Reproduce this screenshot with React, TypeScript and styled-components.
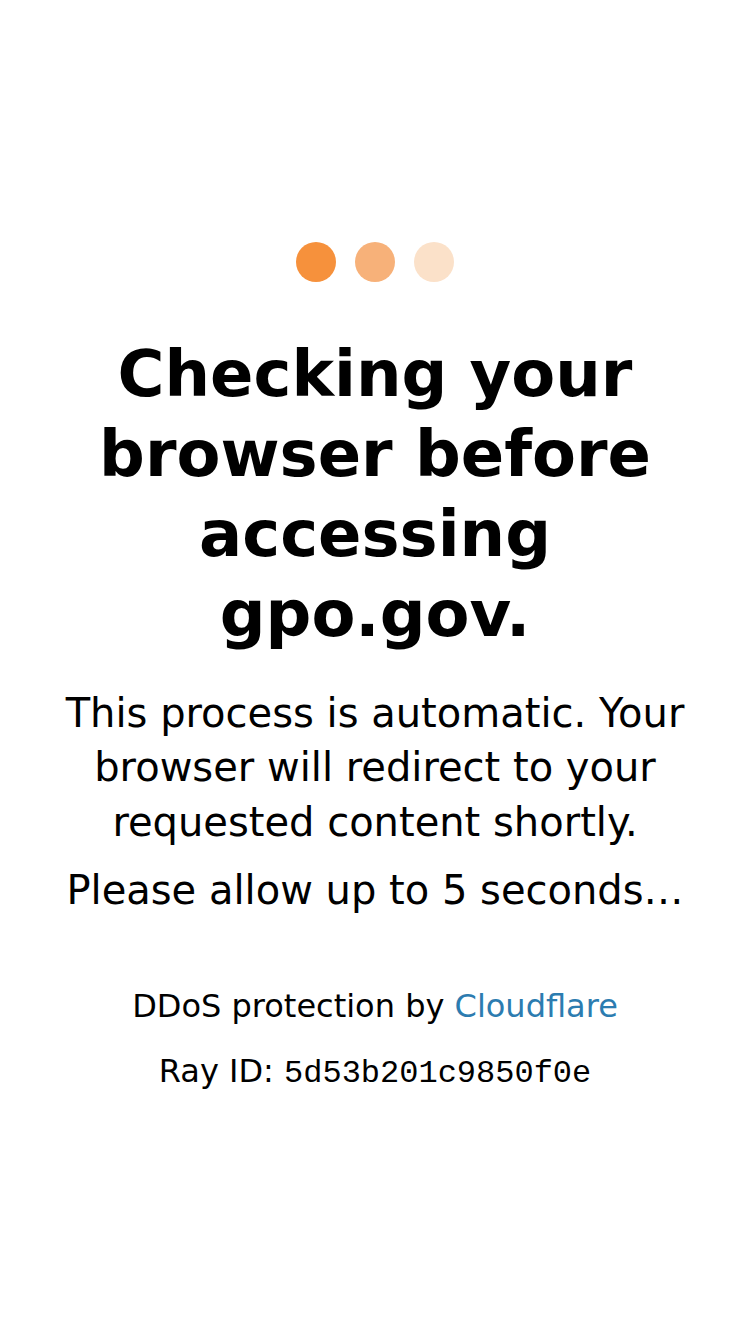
import React from "react";
import styled, { createGlobalStyle } from "styled-components";

const GlobalStyle = createGlobalStyle`
  html, body {
    margin: 0;
    padding: 0;
    background: #ffffff;
  }
  body {
    color: #000000;
    font-family: "DejaVu Sans", "Noto Sans", sans-serif;
    font-size: 32px;
    line-height: 54.4px;
    -webkit-font-smoothing: antialiased;
  }
`;

const Page = styled.div`
  min-height: 1334px;
  box-sizing: border-box;
  padding: 242px 40px 0;
  display: flex;
  flex-direction: column;
  align-items: center;
  text-align: center;
`;

const Spinner = styled.div`
  display: flex;
  gap: 19px;
  margin-bottom: 52px;
`;

const Bubble = styled.div<{ $tint: string }>`
  width: 40px;
  height: 40px;
  border-radius: 50%;
  background-color: ${({ $tint }) => $tint};
`;

const Heading = styled.h1`
  margin: 0 0 32px;
  font-size: 64px;
  font-weight: 700;
  line-height: 80px;
`;

const Text = styled.p`
  margin: 0 0 14px;
  font-size: 40px;
  line-height: 54.4px;
`;

const Attribution = styled.div`
  margin-top: 42px;
  font-size: 32px;
  line-height: 65px;
`;

const Link = styled.a`
  color: #2c7cb0;
  text-decoration: none;
`;

const Code = styled.code`
  font-family: "Liberation Mono", monospace;
  font-size: 32px;
`;

export default function App() {
  return (
    <>
      <GlobalStyle />
      <Page>
        <Spinner>
          <Bubble $tint="#f6913c" />
          <Bubble $tint="#f7b179" />
          <Bubble $tint="#fbe1c9" />
        </Spinner>
        <Heading>Checking your browser before accessing gpo.gov.</Heading>
        <Text>
          This process is automatic. Your browser will redirect to your
          requested content shortly.
        </Text>
        <Text>Please allow up to 5 seconds…</Text>
        <Attribution>
          DDoS protection by <Link href="#">Cloudflare</Link>
          <br />
          Ray ID: <Code>5d53b201c9850f0e</Code>
        </Attribution>
      </Page>
    </>
  );
}
